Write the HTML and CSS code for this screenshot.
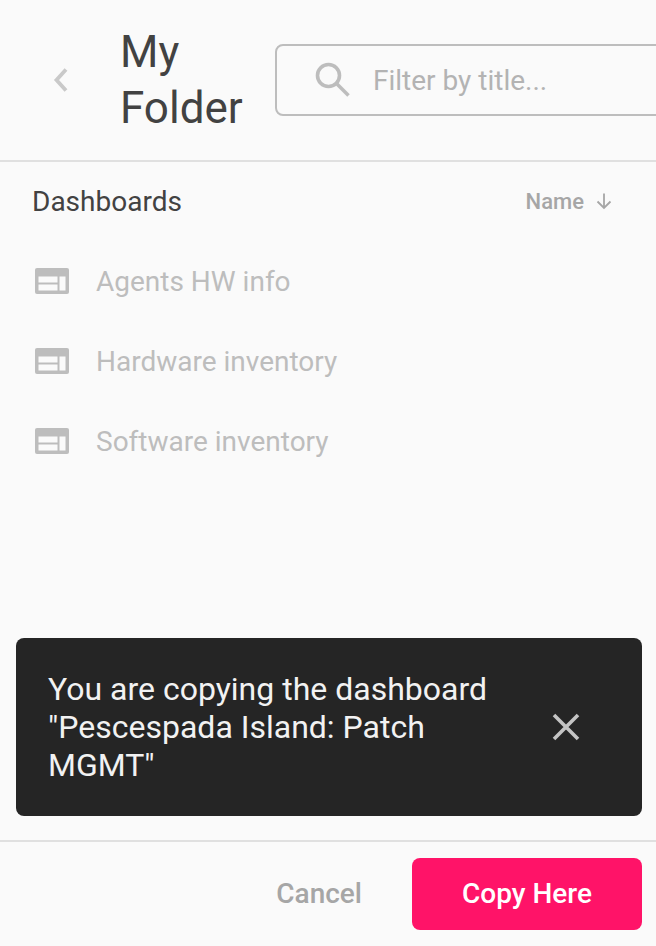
FILE: index.html
```html
<!DOCTYPE html>
<html lang="en">
<head>
    <meta charset="UTF-8">
    <meta name="viewport" content="width=device-width, initial-scale=1.0">
    <title>My Folder</title>
    <link rel="stylesheet" href="styles.css">
</head>
<body>
    <div class="page">
        <header class="header">
            <svg class="back" width="18" height="26" viewBox="0 0 18 26"><path d="M14 2.5 L4.5 13 L14 23.5" fill="none" stroke="#c9c9c9" stroke-width="3.8"/></svg>
            <h1 class="title">My Folder</h1>
            <div class="search">
                <svg class="search-icon" width="38" height="38" viewBox="0 0 38 38"><circle cx="14.5" cy="14.5" r="11" fill="none" stroke="#bdbdbd" stroke-width="3.6"/><path d="M22.5 22.5 L34.5 34.5" fill="none" stroke="#bdbdbd" stroke-width="3.6"/></svg>
                <span class="placeholder">Filter by title...</span>
            </div>
        </header>

        <main class="content">
            <div class="list-head">
                <span class="list-title">Dashboards</span>
                <span class="sort">Name
                    <svg width="18" height="18" viewBox="0 0 18 18"><path d="M9 1.5 V16 M2.5 9.5 L9 16 L15.5 9.5" fill="none" stroke="#a6a6a6" stroke-width="1.8"/></svg>
                </span>
            </div>
            <ul class="list">
                <li class="item">
                    <svg class="item-icon" width="34" height="26" viewBox="0 0 34 26"><path fill="#bdbdbd" fill-rule="evenodd" d="M2 0H32A2 2 0 0 1 34 2V24A2 2 0 0 1 32 26H2A2 2 0 0 1 0 24V2A2 2 0 0 1 2 0ZM3.5 8.5V14.5H22.5V8.5ZM3.5 16.5V22.5H22.5V16.5ZM24.5 8.5V22.5H30.5V8.5Z"/></svg>
                    <span>Agents HW info</span>
                </li>
                <li class="item">
                    <svg class="item-icon" width="34" height="26" viewBox="0 0 34 26"><path fill="#bdbdbd" fill-rule="evenodd" d="M2 0H32A2 2 0 0 1 34 2V24A2 2 0 0 1 32 26H2A2 2 0 0 1 0 24V2A2 2 0 0 1 2 0ZM3.5 8.5V14.5H22.5V8.5ZM3.5 16.5V22.5H22.5V16.5ZM24.5 8.5V22.5H30.5V8.5Z"/></svg>
                    <span>Hardware inventory</span>
                </li>
                <li class="item">
                    <svg class="item-icon" width="34" height="26" viewBox="0 0 34 26"><path fill="#bdbdbd" fill-rule="evenodd" d="M2 0H32A2 2 0 0 1 34 2V24A2 2 0 0 1 32 26H2A2 2 0 0 1 0 24V2A2 2 0 0 1 2 0ZM3.5 8.5V14.5H22.5V8.5ZM3.5 16.5V22.5H22.5V16.5ZM24.5 8.5V22.5H30.5V8.5Z"/></svg>
                    <span>Software inventory</span>
                </li>
            </ul>
        </main>

        <div class="toast">
            <p class="toast-text">You are copying the dashboard "Pescespada Island: Patch MGMT"</p>
            <svg class="toast-close" width="28" height="28" viewBox="0 0 28 28"><path d="M2 2 L26 26 M26 2 L2 26" fill="none" stroke="#c4c4c4" stroke-width="3.6"/></svg>
        </div>

        <footer class="footer">
            <button class="btn-cancel">Cancel</button>
            <button class="btn-copy">Copy Here</button>
        </footer>
    </div>
</body>
</html>
```

FILE: styles.css
```css
html, body {
    margin: 0;
    padding: 0;
}
body {
    font-family: Roboto, "Liberation Sans", sans-serif;
    background-color: #fafafa;
    overflow: hidden;
}
.page {
    display: flex;
    flex-direction: column;
    height: 946px;
    width: 656px;
    overflow: hidden;
}
.header {
    display: flex;
    align-items: center;
    height: 160px;
    flex-shrink: 0;
    border-bottom: 2px solid #e0e0e0;
}
.back {
    margin-left: 52px;
    flex-shrink: 0;
}
.title {
    margin: 0 0 0 50px;
    width: 155px;
    flex-shrink: 0;
    font-size: 44px;
    line-height: 56px;
    font-weight: 400;
    color: #424242;
}
.search {
    display: flex;
    align-items: center;
    box-sizing: border-box;
    width: 420px;
    height: 72px;
    flex-shrink: 0;
    border: 2px solid #bdbdbd;
    border-radius: 8px;
    padding-left: 37px;
}
.search-icon {
    flex-shrink: 0;
}
.placeholder {
    margin-left: 21px;
    font-size: 28px;
    color: #b3b3b3;
}
.content {
    flex: 1;
}
.list-head {
    display: flex;
    justify-content: space-between;
    align-items: center;
    height: 78px;
    padding: 0 43px 0 32px;
}
.list-title {
    font-size: 28px;
    color: #424242;
}
.sort {
    display: flex;
    align-items: center;
    gap: 11px;
    font-size: 22px;
    font-weight: 500;
    color: #a6a6a6;
}
.list {
    list-style: none;
    margin: 1px 0 0;
    padding: 0;
}
.item {
    display: flex;
    align-items: center;
    height: 80px;
    padding-left: 35px;
    font-size: 28px;
    color: #bdbdbd;
}
.item-icon {
    margin-right: 27px;
    flex-shrink: 0;
}
.toast {
    display: flex;
    align-items: center;
    justify-content: space-between;
    height: 178px;
    box-sizing: border-box;
    margin: 0 14px 24px 16px;
    padding: 0 62px 0 32px;
    background-color: #252525;
    border-radius: 8px;
}
.toast-text {
    margin: 0;
    width: 460px;
    font-size: 32px;
    line-height: 38px;
    color: #f2f2f2;
}
.toast-close {
    flex-shrink: 0;
}
.footer {
    display: flex;
    justify-content: flex-end;
    align-items: center;
    gap: 50px;
    height: 106px;
    box-sizing: border-box;
    border-top: 2px solid #e0e0e0;
    padding: 0 14px 0 0;
    flex-shrink: 0;
}
button {
    font-family: inherit;
    font-size: 28px;
    font-weight: 500;
    border: none;
    background: none;
    padding: 0 0 2px;
    cursor: pointer;
}
.btn-cancel {
    color: #a6a6a6;
}
.btn-copy {
    width: 230px;
    height: 72px;
    border-radius: 8px;
    background-color: #ff1368;
    color: #fff;
}
```
